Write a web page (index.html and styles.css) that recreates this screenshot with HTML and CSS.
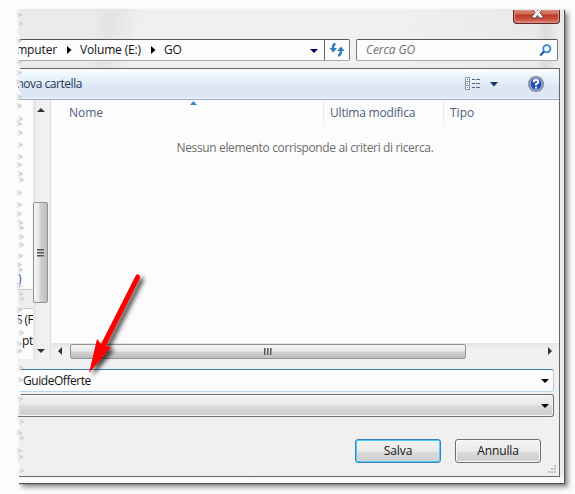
FILE: index.html
```html
<!DOCTYPE html>
<html lang="it">
<head>
<meta charset="utf-8">
<title>Salva con nome</title>
<link rel="stylesheet" href="styles.css">
</head>
<body>
<main class="dialog">
  <header class="titlebar">
    <button class="close" aria-label="Chiudi">
      <svg width="47" height="16" viewBox="0 0 47 16"><path d="M19.500 1h3.500l1.500 2.500L26 1h3.500v1.500L27 5.500l3 4V11h-4L24.500 8.500 23 11h-4V9.500l3-4-2.500-3z" fill="#f4eeee" stroke="#5d4650"/></svg>
    </button>
  </header>
  <nav class="location">
    <div class="address">
      <span class="crumb c1">mputer</span>
      <svg class="sep" width="5" height="8"><path d="M0 0l4.500 4L0 8z"/></svg>
      <span class="crumb c2">Volume (E:)</span>
      <svg class="sep" width="5" height="8"><path d="M0 0l4.500 4L0 8z"/></svg>
      <span class="crumb c3">GO</span>
      <svg class="drop" width="8" height="4"><path d="M0 0h8L4 4z" fill="#00005c"/></svg>
      <div class="refresh"><svg width="16" height="14" viewBox="0 0 16 14"><path d="M6.500 1Q4 1 4 5M9 12.500q3 0 3-5" fill="none" stroke="#327bc5" stroke-width="2.400"/><path d="M.5 5h7.500L4.200 9.500zM8 8h7.500L12 3.500z" fill="#327bc5"/></svg></div>
    </div>
    <div class="search"><span>Cerca GO</span>
      <svg width="13" height="13" viewBox="0 0 13 13"><circle cx="7.800" cy="4.700" r="3.600" fill="#eaf7ff" stroke="#3986ce" stroke-width="1.800"/><path d="M5 7.500L1.200 11.500" stroke="#285fa9" stroke-width="2.400"/></svg>
    </div>
  </nav>
  <section class="client">
    <div class="toolbar">
      <span class="new">nova cartella</span>
      <svg class="view" width="16" height="14" viewBox="0 0 16 14"><g fill="#fff" stroke="#8293aa"><path d="M.5.5h4v4h-4zM.5 4.500h4v4h-4zM.5 8.500h4v4h-4z"/></g><path d="M2 2h1v1H2zM2 10h1v1H2z" fill="#3c6fae"/><path d="M2 6h1v1H2z" fill="#d22"/><path d="M7 2.500h3m1 0h4M7 6.500h3m1 0h4M7 10.500h3m1 0h4" stroke="#526684"/></svg>
      <svg class="viewdrop" width="8" height="5"><path d="M0 0h8L4 4.500z" fill="#17365f"/></svg>
      <svg class="help" width="16" height="16" viewBox="0 0 16 16"><circle cx="8" cy="8" r="7.200" fill="#244fb0" stroke="#858d98" stroke-width="1.600"/><circle cx="8" cy="8" r="6" fill="none" stroke="#c9dcf5" stroke-width=".8"/><path d="M5.700 6.200Q5.700 4 8 4t2.300 2Q10.300 7.200 8 8.200v1.300M8 10.700v1.700" fill="none" stroke="#fff" stroke-width="1.900"/></svg>
    </div>
    <div class="browser">
      <aside class="tree">
        <span class="paren">)</span>
        <div class="treebar"></div>
        <span class="t1">S (F</span>
        <span class="t2">pt</span>
      </aside>
      <div class="vscroll">
        <svg width="8" height="4"><path d="M0 4h8L4 0z" fill="#333"/></svg>
        <div class="vthumb"><i></i><i></i><i></i></div>
        <svg width="8" height="4"><path d="M0 0h8L4 4z" fill="#333"/></svg>
      </div>
      <div class="files">
        <div class="columns">
          <span class="nome">Nome</span><span class="data">Ultima modifica</span><span class="tipo">Tipo</span>
          <svg class="sort" width="7" height="4"><path d="M0 4h7L3.500 0z" fill="#3e86b5"/></svg>
        </div>
        <p class="empty">Nessun elemento corrisponde ai criteri di ricerca.</p>
        <div class="hscroll">
          <svg width="4" height="8"><path d="M4 0v8L0 4z" fill="#333"/></svg>
          <div class="hthumb"><i></i><i></i><i></i></div>
          <svg width="4" height="8"><path d="M0 0v8l4-4z" fill="#333"/></svg>
        </div>
      </div>
    </div>
    <div class="form">
      <div class="field name"><span>GuideOfferte</span><svg width="8" height="4"><path d="M0 0h8L4 4z"/></svg></div>
      <div class="field type"><svg width="8" height="4"><path d="M0 0h8L4 4z"/></svg></div>
      <div class="actions"><button class="btn save">Salva</button><button class="btn">Annulla</button></div>
      <svg class="grip" width="8" height="8"><path d="M6 0h2v2H6zM3 3h2v2H3zM6 3h2v2H6zM0 6h2v2H0zM3 6h2v2H3zM6 6h2v2H6z" fill="#bcbcbc"/></svg>
    </div>
  </section>
</main>
<svg class="overlay" width="575" height="494" viewBox="0 0 575 494">
  <defs>
    <linearGradient id="g"><stop offset="0" stop-color="#f3f3f3"/><stop offset=".5" stop-color="#e0e0e0"/><stop offset="1" stop-color="#b4b4b4"/></linearGradient>
    <path id="t" d="M-6-4L-2-2 0 0-4 3-6 2-5 0z" fill="url(#g)"/>
    <filter id="s" x="-50%" y="-20%" width="220%" height="150%"><feDropShadow dx="3.500" dy="3" stdDeviation="2" flood-color="#000" flood-opacity=".7"/></filter>
  </defs>
  <path fill="#fcfcfc" d="M13 5h5l-2 6 2 6-2 4 4 4-4 5 4 7-3 6 2 6-1 6 3 3-3 4 2 6-2 6 2 7-2 7 3 6-3 6 2 6-3 8 4 8-3 4v240l2 4-2 6 3 4-3 6 3 10-3 8 1 9-3 8 4 5-3 7 4 4-3 8 3 9-3 7 4 8-3 7v8h-4z"/>
  <g>
    <use href="#t" x="23" y="24"/><use href="#t" x="22" y="15"/><use href="#t" x="22" y="41"/><use href="#t" x="22" y="62"/><use href="#t" x="22" y="73"/><use href="#t" x="21" y="82"/><use href="#t" x="22" y="97"/><use href="#t" x="22" y="106"/><use href="#t" x="23" y="119"/><use href="#t" x="22" y="124"/><use href="#t" x="23" y="133"/><use href="#t" x="23" y="145"/><use href="#t" x="23" y="157"/><use href="#t" x="22" y="165"/><use href="#t" x="23" y="174"/><use href="#t" x="24" y="180"/><use href="#t" x="22" y="193"/><use href="#t" x="22" y="205"/><use href="#t" x="22" y="214"/><use href="#t" x="23" y="223"/><use href="#t" x="24" y="228"/><use href="#t" x="24" y="237"/><use href="#t" x="24" y="245"/><use href="#t" x="23" y="256"/><use href="#t" x="22" y="265"/><use href="#t" x="23" y="270"/><use href="#t" x="22" y="286"/><use href="#t" x="23" y="294"/><use href="#t" x="24" y="299"/><use href="#t" x="22" y="310"/><use href="#t" x="22" y="322"/><use href="#t" x="24" y="333"/><use href="#t" x="22" y="344"/><use href="#t" x="22" y="351"/><use href="#t" x="23" y="368"/><use href="#t" x="23" y="380"/><use href="#t" x="23" y="399"/><use href="#t" x="23" y="413"/><use href="#t" x="24" y="422"/><use href="#t" x="22" y="433"/><use href="#t" x="24" y="438"/><use href="#t" x="22" y="451"/><use href="#t" x="23" y="457"/><use href="#t" x="24" y="471"/>
  </g>
  <path class="arrow" filter="url(#s)" fill="#fb0505" d="M136 275q2-2 4 1v2L106 346l5 1-22 26 8-34 4 5z"/>
</svg>
</body>
</html>
```
FILE: styles.css
```css
* { box-sizing: border-box; }
body {
  margin: 0;
  width: 575px;
  height: 494px;
  overflow: hidden;
  padding: 9px 11px 11px 18px;
  background: #fcfcfc;
  font: 12px/16px "Open Sans", "Noto Sans", sans-serif;
  letter-spacing: -0.15px;
  color: #151515;
}
svg { display: block; flex: none; }
button { font: inherit; letter-spacing: inherit; padding: 0; }
.dialog {
  width: 546px;
  height: 474px;
  background:
    linear-gradient(#f8f8f8, #fcfcfc) 0 100% / 100% 6px no-repeat,
    linear-gradient(90deg, transparent, #dcdcdc 50%, transparent) 516px 14px / 24px 45px no-repeat,
    linear-gradient(100deg, #ebebeb 0 12%, #e3e3e3 15%, #f0f0f0 20% 60%, #eaeaea 80%, #ededed);
  box-shadow: 1px 1px 1px #555, 4px 4px 5px #888;
  display: flex;
  flex-direction: column;
}
.titlebar { height: 30px; display: flex; justify-content: flex-end; padding: 1px 4px 0 0; }
.close {
  width: 47px;
  height: 14px;
  border: 1px solid #59252a;
  border-top: 0;
  border-radius: 0 0 4px 4px;
  background: linear-gradient(#d57965 0 25%, #bd3926 40%, #c9503b 70%, #df8b78);
  overflow: hidden;
  box-shadow: inset 0 0 0 1px #dc9184;
}
.close svg { margin: -3px 0 0 -1px; }
.location { display: flex; gap: 6px; height: 22px; }
.address, .search {
  border: 1px solid #777;
  border-top-color: #555;
  border-bottom-color: #aaa;
  background: #fcfcfc;
  display: flex;
  align-items: center;
}
.address { width: 332px; border-left: 0; border-radius: 0 2px 2px 0; }
.crumb { white-space: nowrap; }
.c1 { width: 39px; display: flex; justify-content: flex-end; }
.c2 { width: 60px; margin: 0 11px 0 8px; }
.c1 + .sep { margin-left: 10px; }
.c3 { margin-left: 8px; }
.drop { margin: 1px 6px 0 auto; }
.refresh { width: 25px; height: 20px; border-left: 1px solid #666; display: grid; place-items: center; }
.search { width: 202px; justify-content: space-between; padding: 0 5px 0 9px; border-radius: 2px; font-style: italic; color: #707070; letter-spacing: -0.1px; }
.client { margin-top: 7px; width: 542px; flex: none; height: 409px; border: 1px solid #676767; border-left: 0; background: #f0f0f0; }
.toolbar {
  height: 31px;
  display: flex;
  align-items: center;
  background: linear-gradient(#f9fcff 0, #f0f7fd 6px, #e7f3fb 7px, #e7f1fa 14px, #dce6f4 15px, #dce6f4 28px, #eaf1f8 29px);
  border-bottom: 1px solid #9cafcb;
  color: #1e395b;
}
.new { width: 64px; display: flex; justify-content: flex-end; white-space: nowrap; letter-spacing: -0.45px; }
.view { margin-left: 383px; }
.viewdrop { margin: 1px 0 0 9px; }
.help { margin-left: 30px; }
.browser { display: flex; height: 259px; }
.tree { width: 15px; height: 259px; background: #fcfcfc; white-space: nowrap; display: flex; flex-direction: column; align-items: flex-start; }
.paren { color: #174dba; margin-top: 171px; }
.treebar { width: 15px; height: 20px; margin-top: 2px; border: 1px solid #c9c9c9; border-width: 1px 0; background: #eee; }
.t1 { margin: 3px 0 0 -2px; letter-spacing: -0.6px; }
.t2 { margin: 5px 0 0 4px; letter-spacing: -0.3px; }
.vscroll {
  width: 16px;
  background: linear-gradient(90deg, #e3e3e3, #eee 4px, #f1f1f1);
  display: flex;
  flex-direction: column;
  align-items: center;
  padding: 8px 1px 6px 0;
}
.vthumb {
  width: 15px;
  height: 101px;
  margin: 90px 0 46px;
  border: 1px solid #929292;
  border-radius: 2px;
  background: linear-gradient(90deg, #f5f5f5, #e8e8e8 5px, #d2d2d2 6px, #bfbfbf);
  display: flex;
  flex-direction: column;
  align-items: center;
  justify-content: center;
  gap: 1px;
}
.vthumb i { width: 7px; height: 2px; border-bottom: 1px solid #999; background: #555; }
.files { flex: 1; margin-left: 1px; border-left: 1px solid #cfe1f1; background: #fcfcfc; display: flex; flex-direction: column; }
.columns { position: relative; height: 22px; display: flex; align-items: center; color: #4c607a; padding-top: 5px; letter-spacing: -0.2px; }
.columns span { height: 22px; margin-top: -5px; padding: 5px 0 0 6px; border-left: 1px solid #dfe9f3; }
.columns .nome { width: 272px; border: 0; padding-left: 18px; letter-spacing: 0; }
.data { width: 120px; }
.columns .tipo { letter-spacing: 0; }
.sort { position: absolute; left: 139px; top: 1px; }
.empty { margin: 18px 0 0; text-align: center; color: #6d6d6d; letter-spacing: -0.36px; }
.hscroll { margin-top: auto; height: 16px; display: flex; align-items: center; background: linear-gradient(#e5e5e5, #f1f1f1 6px); padding: 0 7px; }
.hthumb { width: 396px; height: 15px; margin: 0 auto 0 8px; border: 1px solid #929292; border-radius: 2px; background: linear-gradient(#f5f5f5, #e8e8e8 6px, #d2d2d2 7px, #bfbfbf); display: flex; align-items: center; justify-content: center; gap: 1px; }
.hthumb i { height: 7px; width: 2px; background: #555; border-right: 1px solid #999; }
.form { position: relative; height: 117px; padding-top: 10px; }
.field { height: 23px; width: 536px; border: 1px solid #707070; border-left: 0; border-radius: 0 3px 3px 0; display: flex; align-items: center; padding: 0 4px 0 5px; }
.field svg { margin: 1px 0 0 auto; }
.name { background: #fcfcfc; border-color: #3d7bad #abcfe8 #b7d9ed; letter-spacing: -0.45px; }
.type { margin-top: 2px; background: linear-gradient(#f2f2f2, #e9e9e9 10px, #d9d9d9 11px, #cfcfcf); box-shadow: inset 0 0 0 1px #f5f5f5; }
.actions { display: flex; justify-content: flex-end; gap: 14px; margin: 22px 18px 0 0; }
.btn { width: 86px; height: 24px; border: 1px solid #707070; border-radius: 3px; background: linear-gradient(#f3f3f3, #ebebeb 11px, #dadada 12px, #cfcfcf); box-shadow: inset 0 0 0 1px #f8f8f8; color: #151515; letter-spacing: -0.1px; }
.save { border-color: #3c7fb1; box-shadow: inset 0 0 0 1px #45d0f8; }
.grip { position: absolute; right: 3px; bottom: 3px; }
.overlay { position: absolute; left: 0; top: 0; pointer-events: none; }
```
